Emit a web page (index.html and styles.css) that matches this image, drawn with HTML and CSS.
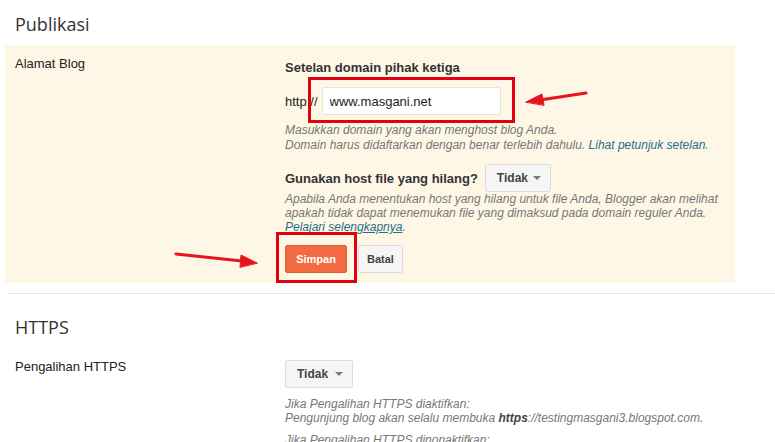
FILE: index.html
```html
<!DOCTYPE html>
<html lang="id">
<head>
  <meta charset="UTF-8" />
  <meta name="viewport" content="width=device-width, initial-scale=1.0"/>
  <title>Setelan - Publikasi</title>
  <link rel="stylesheet" href="styles.css">
</head>
<body>
  <h2 class="section-title first">Publikasi</h2>

  <div class="setting-row editing">
    <div class="setting-label">Alamat Blog</div>
    <div class="setting-body">
      <h4 class="sub-title">Setelan domain pihak ketiga</h4>
      <div class="domain-row">
        <span class="prefix">http://</span>
        <input type="text" class="text-input" value="www.masgani.net">
      </div>
      <p class="help">
        Masukkan domain yang akan menghost blog Anda.<br>
        Domain harus didaftarkan dengan benar terlebih dahulu. <a href="#">Lihat petunjuk setelan</a>.
      </p>
      <div class="host-row">
        <span class="host-label">Gunakan host file yang hilang?</span>
        <button class="dropdown">Tidak <span class="caret"></span></button>
      </div>
      <p class="help tight">
        Apabila Anda menentukan host yang hilang untuk file Anda, Blogger akan melihat
        apakah tidak dapat menemukan file yang dimaksud pada domain reguler Anda.
        <a href="#" class="under">Pelajari selengkapnya</a>.
      </p>
      <div class="actions">
        <button class="btn btn-primary">Simpan</button>
        <button class="btn">Batal</button>
      </div>
    </div>
  </div>

  <hr class="divider">

  <h2 class="section-title">HTTPS</h2>

  <div class="setting-row plain">
    <div class="setting-label">Pengalihan HTTPS</div>
    <div class="setting-body">
      <button class="dropdown">Tidak <span class="caret"></span></button>
      <p class="help tight spaced">
        Jika Pengalihan HTTPS diaktifkan:<br>
        Pengunjung blog akan selalu membuka <b>https</b>://testingmasgani3.blogspot.com.
      </p>
      <p class="help tight">
        Jika Pengalihan HTTPS dinonaktifkan:
      </p>
    </div>
  </div>

  <!-- anotasi merah di atas tangkapan layar -->
  <div class="mark mark-domain"></div>
  <div class="mark mark-save"></div>
  <svg class="arrows" width="775" height="442" viewBox="0 0 775 442">
    <g stroke="#e8141b" stroke-width="3" stroke-linecap="round" fill="#e8141b">
      <line x1="586" y1="93" x2="540" y2="100" />
      <polygon points="526,102 542,94 544,105" stroke-width="1" />
      <line x1="176" y1="254" x2="242" y2="261" />
      <polygon points="257,263 241,255 240,267" stroke-width="1" />
    </g>
  </svg>
</body>
</html>
```

FILE: styles.css
```css
body { margin: 0; font-family: "Liberation Sans", Arial, sans-serif; font-size: 13px; color: #222; background: #fff; position: relative; height: 442px; overflow: hidden; }
.section-title { font-family: "Open Sans", sans-serif; font-weight: normal; font-size: 18px; line-height: 24px; color: #333; margin: 21px 0 0 15px; }
.section-title.first { margin-top: 12px; }
.setting-row { display: grid; grid-template-columns: 270px 1fr; padding: 9px 0 10px 10px; margin-left: 5px; width: 720px; }
.setting-row.editing { background: #fef7e6; margin-top: 9px; padding-top: 11px; }
.setting-row.plain { padding-top: 20px; }
.setting-label { line-height: 16px; color: #222; }
.setting-body { min-width: 0; }
.sub-title { margin: 4px 0 0; font-size: 13px; line-height: 16px; color: #333; }
.domain-row { display: flex; align-items: center; gap: 4px; margin-top: 11px; }
.prefix { color: #222; }
.text-input { width: 179px; height: 28px; box-sizing: border-box; padding: 0 7px; border: 1px solid #e8e3d8; border-radius: 2px; font-family: inherit; font-size: 13px; color: #222; background: #fff; }
.help { margin: 8px 0 0; font-size: 12px; line-height: 15px; font-style: italic; color: #777; }
.help.tight { margin-top: 0; line-height: 14px; }
.help.spaced { margin-top: 9px; margin-bottom: 8px; }
.help a { color: #1f6f8b; text-decoration: none; }
.help a.under { text-decoration: underline; }
.help b { color: #444; }
.host-row { display: flex; align-items: center; gap: 7px; margin-top: 11px; }
.host-label { font-weight: bold; font-size: 13px; color: #333; }
.dropdown { height: 28px; width: 66px; padding: 0 9px 0 11px; border: 1px solid #dcdcdc; border-radius: 2px; background: #f5f5f5; font-family: inherit; font-size: 12px; font-weight: bold; color: #444; display: inline-flex; align-items: center; justify-content: space-between; }
.caret { width: 0; height: 0; border-left: 4px solid transparent; border-right: 4px solid transparent; border-top: 4px solid #777; }
.setting-body > .dropdown { margin-top: 1px; width: 68px; }
.actions { display: flex; gap: 11px; margin-top: 11px; }
.btn { height: 28px; padding: 0 8px; border: 1px solid #dcdcdc; border-radius: 2px; background: #f5f5f5; font-family: inherit; font-size: 11px; font-weight: bold; color: #444; }
.btn-primary { width: 62px; background: #f26b43; border-color: #e0603a; color: #fff; }
.divider { border: 0; border-top: 1px solid #e5e5e5; margin: 10px 0 0 7px; }
.mark { position: absolute; border: 3px solid #e3000f; }
.mark-domain { left: 308px; top: 77px; width: 201px; height: 40px; }
.mark-save { left: 276px; top: 232px; width: 75px; height: 45px; }
.arrows { position: absolute; left: 0; top: 0; pointer-events: none; }
```
